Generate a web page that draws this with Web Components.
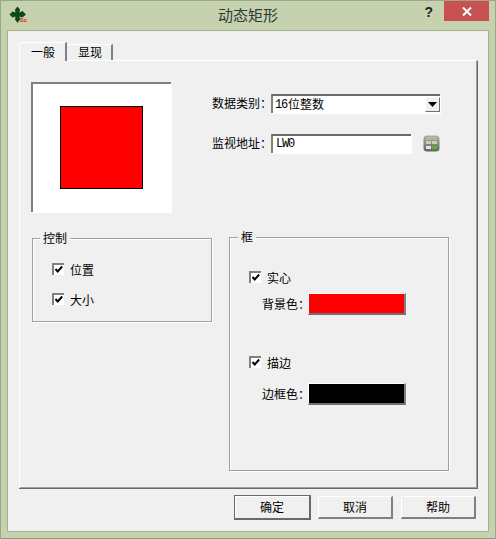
<!DOCTYPE html>
<html lang="zh">
<head>
<meta charset="utf-8">
<title>动态矩形</title>
<style>
html,body{margin:0;padding:0;background:#c6d1ae}
body{font:12px/14px "Noto Sans CJK SC","Liberation Sans",sans-serif;color:#000}
</style>
</head>
<body>
<x-dialog>
  <x-titlebar slot="title">动态矩形</x-titlebar>
  <x-tabs slot="tabs">
    <x-tab active>一般</x-tab>
    <x-tab>显现</x-tab>
  </x-tabs>
  <x-pane slot="pane">
    <x-top>
      <x-preview slot="preview"></x-preview>
      <x-field slot="f1" label="数据类别："><x-combo>16位整数</x-combo></x-field>
      <x-field slot="f2" label="监视地址："><x-input>LW0</x-input><x-calc></x-calc></x-field>
    </x-top>
    <x-bottom>
      <x-group slot="left" legend="控制" kind="left">
        <x-check>位置</x-check>
        <x-check style="margin-top:18px">大小</x-check>
      </x-group>
      <x-group slot="right" legend="框" kind="right">
        <x-check>实心</x-check>
        <x-color label="背景色：" color="#ff0000" style="margin-top:10px"></x-color>
        <x-check style="margin-top:41px">描边</x-check>
        <x-color label="边框色：" color="#000000" style="margin-top:15px"></x-color>
      </x-group>
    </x-bottom>
  </x-pane>
  <x-actions slot="actions">
    <x-btn default>确定</x-btn>
    <x-btn>取消</x-btn>
    <x-btn style="margin-left:1px">帮助</x-btn>
  </x-actions>
</x-dialog>
<script>
function el(name, css, html){
  customElements.define(name, class extends HTMLElement{
    connectedCallback(){
      if(this.shadowRoot) return;
      const r=this.attachShadow({mode:'open'});
      r.innerHTML='<style>'+css+'</style>'+html;
    }
  });
}
el('x-dialog',`
:host{display:flex;flex-direction:column;width:496px;height:539px;box-sizing:border-box;background:#c6d1ae;border:1px solid #9ba78c;border-bottom-color:#8f9a80;overflow:hidden}
.client{margin:0 6px 6px;flex:1;min-height:0;background:#f0f0f0;border:1px solid #a4b08e;display:flex;flex-direction:column;padding:11px 10px 0 11px}
`,`<slot name="title"></slot><div class="client"><slot name="tabs"></slot><slot name="pane"></slot><slot name="actions"></slot></div>`);

el('x-titlebar',`
:host{display:grid;grid-template-columns:1fr auto 1fr;height:29px;flex:none}
.logo{margin:5px 0 0 8px;width:18px;height:18px;display:block}
.t{font:15px/28px "Noto Sans CJK SC",sans-serif;color:#2f3a3a}
.ctl{display:flex;justify-self:end;align-items:flex-start;margin-right:6px}
.q{font:bold 14px/18px "Liberation Sans",sans-serif;color:#222;margin:2px 11px 0 0}
.x{width:45px;height:20px;background:#c75050;display:flex;align-items:center;justify-content:center}
`,`<svg class="logo" viewBox="0 0 18 18"><path fill="#0b4a1c" d="M8.5 0.5 L11 3.5 10.5 6.5 13.5 5 14.5 6 17 8.5 14 11 13 11.5 10.5 10.5 11 13.5 8.5 17 6 13.5 6.5 10.5 3.5 11.5 0.5 8.5 3.5 5.5 6.5 6.5 6 3.5Z"/><text x="10.8" y="15.5" font-family="Liberation Sans" font-size="6" font-weight="bold" fill="#e02020">Sc</text></svg>
<div class="t"><slot></slot></div>
<div class="ctl"><div class="q">?</div><div class="x"><svg width="10" height="9" viewBox="0 0 10 9"><path d="M1 .5 9 8.5M9 .5 1 8.5" stroke="#fff" stroke-width="2" fill="none"/></svg></div></div>`);

el('x-tabs',`:host{display:flex;align-items:flex-end;height:18px;flex:none;position:relative;z-index:1}`,`<slot></slot>`);

customElements.define('x-tab',class extends HTMLElement{
  connectedCallback(){
    if(this.shadowRoot) return;
    const a=this.hasAttribute('active');
    const r=this.attachShadow({mode:'open'});
    r.innerHTML=`<style>:host{display:block;box-sizing:border-box;width:${a?48:46}px;height:${a?19:16}px;margin-bottom:${a?-1:0}px;background:#f0f0f0;border-top:1px solid #fff;border-left:${a?1:0}px solid #fff;border-right:2px solid #808080;border-top-left-radius:2px;text-align:center;line-height:${a?17:14}px;padding-left:${a?1:2}px;}</style><slot></slot>`;
  }
});

el('x-pane',`
:host{display:flex;flex-direction:column;box-sizing:border-box;height:429px;flex:none;background:#f0f0f0;border-left:1px solid #fff;border-top:1px solid #fff;border-right:2px solid #a0a0a0;border-bottom:2px solid #a0a0a0;position:relative}
:host::after{content:"";position:absolute;left:-1px;right:-2px;bottom:-2px;height:1px;background:#696969}
:host::before{content:"";position:absolute;top:0;right:-2px;bottom:-2px;width:1px;background:#696969}
`,`<slot></slot>`);

el('x-top',`
:host{display:flex;padding:21px 0 0 11px}
.form{margin-left:41px;padding-top:11px;display:flex;flex-direction:column;gap:20px}
`,`<slot name="preview"></slot><div class="form"><slot name="f1"></slot><slot name="f2"></slot></div>`);

el('x-preview',`
:host{display:block;box-sizing:border-box;width:140px;height:130px;background:#fff;border-top:2px solid #808080;border-left:2px solid #808080;padding:22px 0 0 27px;box-shadow:1px 1px 0 #fff}
.r{width:83px;height:83px;box-sizing:border-box;background:#f00;border:1px solid #000}
`,`<div class="r"></div>`);

customElements.define('x-field',class extends HTMLElement{
  connectedCallback(){
    if(this.shadowRoot) return;
    const r=this.attachShadow({mode:'open'});
    r.innerHTML=`<style>:host{display:flex;align-items:center;height:20px}.l{width:59px;flex:none;white-space:nowrap}</style><div class="l">${this.getAttribute('label')}</div><slot></slot>`;
  }
});

const mono=`font:12px/14px "Liberation Mono","Noto Sans CJK SC",monospace;`;
el('x-combo',`
:host{display:flex;box-sizing:border-box;width:169px;height:19px;background:#fff;border-top:2px solid #696969;border-left:2px solid #808080;box-shadow:1px 1px 0 #fff}
.v{flex:1;padding:1px 0 0 2px;display:flex}
.n{${mono}letter-spacing:-1.2px;padding-top:1px}
.c{font-size:12px;line-height:14px;margin-left:1px}
.b{width:15px;height:15px;margin-top:1px;box-sizing:border-box;background:#f0f0f0;border-top:1px solid #fff;border-left:1px solid #fff;border-right:1px solid #707070;border-bottom:1px solid #707070;display:flex;align-items:center;justify-content:center}
`,`<div class="v"><span class="n">16</span><span class="c">位整数</span></div><div class="b"><svg width="9" height="5" viewBox="0 0 9 5"><path d="M0 0H9L4.5 5Z" fill="#000"/></svg></div>`);

el('x-input',`
:host{display:block;box-sizing:border-box;width:140px;height:19px;background:#fff;border-top:2px solid #696969;border-left:2px solid #808080;box-shadow:1px 1px 0 #fff;padding:1px 0 0 3px;${mono}letter-spacing:-1.2px}
`,`<slot></slot>`);

el('x-calc',`
:host{display:block;width:17px;height:17px;margin-left:12px}
svg{display:block;filter:blur(.35px)}
`,`<svg width="17" height="17" viewBox="0 0 17 17"><defs><linearGradient id="g" x1="0" y1="0" x2="0" y2="1"><stop offset="0" stop-color="#a8b59a"/><stop offset="1" stop-color="#5c6760"/></linearGradient></defs><rect x="0.5" y="0.5" width="16" height="16" rx="3.5" fill="url(#g)"/><rect x="3" y="2" width="11" height="3" fill="#aeb7a0"/><rect x="3" y="6" width="5" height="3" fill="#c8cdc4"/><rect x="9" y="6" width="5" height="3" fill="#c8cdc4"/><rect x="3" y="11" width="5" height="3" fill="#e4e6e0"/><rect x="9" y="11" width="5" height="3" fill="#54b03a"/></svg>`);

el('x-bottom',`
:host{display:flex;align-items:flex-start;margin:25px 0 0 12px;gap:17px}
`,`<slot name="left"></slot><slot name="right"></slot>`);

customElements.define('x-group',class extends HTMLElement{
  connectedCallback(){
    if(this.shadowRoot) return;
    const left=this.getAttribute('kind')==='left';
    const r=this.attachShadow({mode:'open'});
    r.innerHTML=`<style>
:host{display:block;position:relative;box-sizing:border-box;width:${left?180:220}px;height:${left?84:234}px;margin-top:${left?1:0}px;border:1px solid #a0a0a0;box-shadow:1px 1px 0 #fff, inset 1px 1px 0 #fff;padding:${left?24:33}px 0 0 19px}
.lg{position:absolute;left:${left?7:8}px;top:-9px;background:#f0f0f0;padding:0 3px;line-height:16px}
</style><div class="lg">${this.getAttribute('legend')}</div><slot></slot>`;
  }
});

el('x-check',`
:host{display:flex;align-items:center;height:12px;gap:6px;white-space:nowrap}
.b{width:12px;height:12px;box-sizing:border-box;background:#fff;border-top:2px solid #808080;border-left:2px solid #808080;display:block;flex:none}
.t{position:relative;top:1px}
svg{display:block}
`,`<span class="b"><svg width="10" height="10" viewBox="0 0 10 10"><path d="M1.5 4 3.7 6.4 8.2 1.5" fill="none" stroke="#000" stroke-width="2"/></svg></span><span class="t"><slot></slot></span>`);

customElements.define('x-color',class extends HTMLElement{
  connectedCallback(){
    if(this.shadowRoot) return;
    const r=this.attachShadow({mode:'open'});
    r.innerHTML=`<style>
:host{display:flex;align-items:center;height:22px;margin-left:13px}
.l{width:46px;flex:none;white-space:nowrap}
.s{width:98px;height:22px;box-sizing:border-box;background:${this.getAttribute('color')};border-top:1px solid #fff;border-left:1px solid #fff;border-right:2px solid #808080;border-bottom:2px solid #707070}
</style><div class="l">${this.getAttribute('label')}</div><div class="s"></div>`;
  }
});

el('x-actions',`
:host{display:flex;justify-content:flex-end;align-items:flex-start;gap:7px;padding:6px 2px 0 0;flex:none}
`,`<slot></slot>`);

customElements.define('x-btn',class extends HTMLElement{
  connectedCallback(){
    if(this.shadowRoot) return;
    const d=this.hasAttribute('default');
    const r=this.attachShadow({mode:'open'});
    r.innerHTML=`<style>
:host{display:block;flex:none;box-sizing:border-box;width:${d?77:75}px;height:${d?25:23}px;margin-top:${d?0:1}px}
.b{box-sizing:border-box;height:100%;background:#f0f0f0;border-top:1px solid #fff;border-left:1px solid #fff;border-right:2px solid #808080;border-bottom:2px solid #808080;text-align:center;line-height:${d?22:20}px}
:host([default]) .b{border:1px solid #696969;border-right-width:2px;border-bottom-width:2px;box-shadow:inset 1px 1px 0 #fff}
</style><div class="b"><slot></slot></div>`;
  }
});
</script>
</body>
</html>
